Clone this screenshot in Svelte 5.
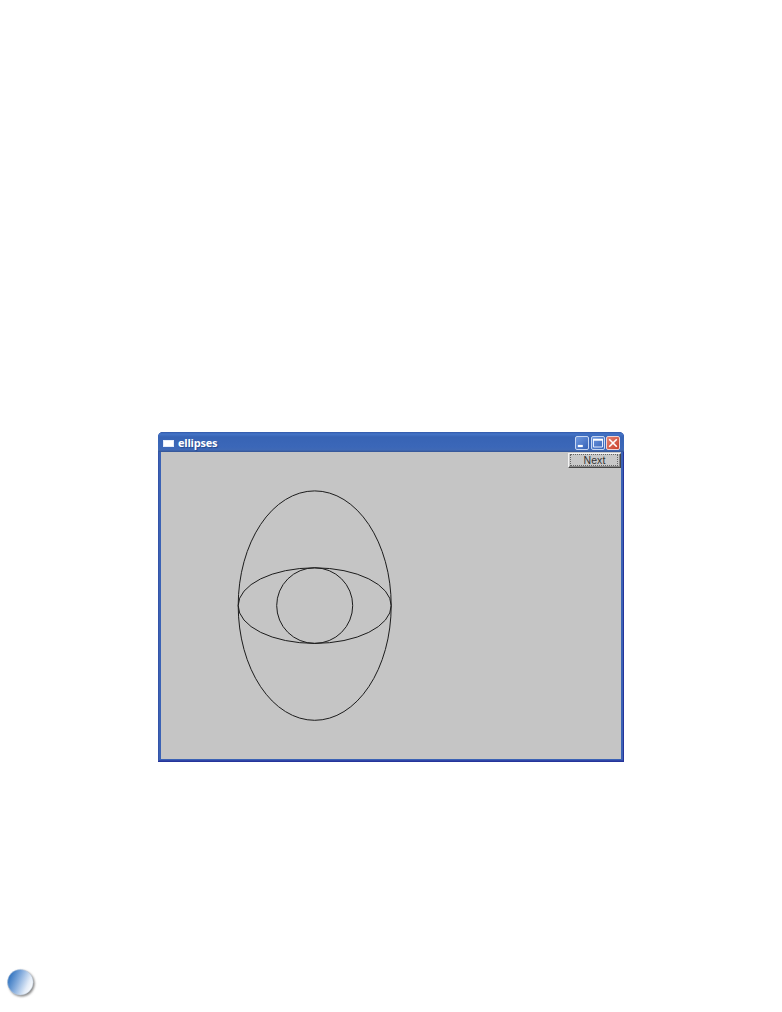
<script>
  const curves = [
    { rx: 76.5, ry: 114.7 },
    { rx: 76.5, ry: 37.8 },
    { rx: 38, ry: 37.8 }
  ];
</script>

<main>
  <section class="window">
    <header>
      <span class="app-icon"></span>
      <h1>ellipses</h1>
      <div class="controls">
        <button class="control" aria-label="Minimize">
          <svg viewBox="0 0 14 14"><path d="M2.8 10h5" stroke="#fff" stroke-width="2.2" /></svg>
        </button>
        <button class="control" aria-label="Maximize">
          <svg viewBox="0 0 14 14"><path d="M2.5 3.5h9v7.5h-9z" fill="none" stroke="#e4edff" /><path d="M2 3.7h10" stroke="#fff" stroke-width="2" /></svg>
        </button>
        <button class="control close" aria-label="Close">
          <svg viewBox="0 0 14 14"><path d="M3.2 3.2l7.6 7.6M10.8 3.2l-7.6 7.6" stroke="#fff" stroke-width="1.6" /></svg>
        </button>
      </div>
    </header>
    <div class="client">
      <button class="next"><span>Next</span></button>
      <svg class="drawing" viewBox="0 0 460 307">
        {#each curves as c}
          <ellipse cx="153.7" cy="153.6" rx={c.rx} ry={c.ry} />
        {/each}
      </svg>
    </div>
  </section>
  <footer>
    <svg width="36" height="36" viewBox="0 0 36 36">
      <defs>
        <linearGradient id="orb" x1="0" y1="0.28" x2="1" y2="0.72">
          <stop offset="0.02" stop-color="#2b6fbd" />
          <stop offset="0.4" stop-color="#83abdc" />
          <stop offset="0.78" stop-color="#e3ecf8" />
          <stop offset="1" stop-color="#fff" />
        </linearGradient>
        <filter id="soft" x="-20%" y="-20%" width="140%" height="140%">
          <feGaussianBlur stdDeviation="0.8" />
        </filter>
      </defs>
      <circle cx="16.6" cy="18.6" r="13" fill="#858585" filter="url(#soft)" />
      <circle cx="15.3" cy="17.2" r="12.8" fill="url(#orb)" stroke="#bccbdd" stroke-width="0.5" />
    </svg>
  </footer>
</main>

<style>
  :global(body) {
    margin: 0;
    background: #fff;
  }
  main {
    box-sizing: border-box;
    width: 782px;
    height: 1012px;
    padding: 432px 0 0 158px;
    display: flex;
    flex-direction: column;
    justify-content: space-between;
    background: #fff;
  }
  .window {
    box-sizing: border-box;
    width: 466px;
    height: 330px;
    padding: 0 3px 3px;
    border-radius: 5px 5px 0 0;
    background: #3b62b5;
    box-shadow: inset -1px -1px #25349a, inset 1px 0 #3554a8, inset 0 -2px #3045a6;
  }
  header {
    display: flex;
    align-items: center;
    box-sizing: border-box;
    height: 20px;
    margin: 0 -3px;
    padding: 2px 4px 0 5px;
    border-radius: 5px 5px 0 0;
    background: linear-gradient(#3158a9 0, #4474c7 2px, #3864b5 5px, #3b67b8 15px, #4069b5 18px, #345493 20px);
  }
  .app-icon {
    box-sizing: border-box;
    width: 11px;
    height: 7px;
    margin-top: 1px;
    background: #fff;
    border: 1px solid #e5edfa;
  }
  h1 {
    margin: 0 0 0 4px;
    color: #fff;
    font: 700 11px/16px "Open Sans", "Noto Sans", sans-serif;
    letter-spacing: -0.2px;
    text-shadow: 1px 1px 1px #23488d;
  }
  .controls {
    display: flex;
    gap: 1.5px;
    margin-left: auto;
  }
  .control {
    box-sizing: border-box;
    width: 14px;
    height: 14px;
    padding: 0;
    border: 1px solid #c8d7f1;
    border-radius: 2px;
    background: linear-gradient(135deg, #6f98df, #3562b7);
  }
  .control svg {
    display: block;
    width: 14px;
    height: 14px;
    margin: -1px;
  }
  .close {
    border-color: #f1d4d1;
    background: linear-gradient(135deg, #e58372, #c9402b);
  }
  .client {
    display: grid;
    height: 307px;
    background: #c5c5c5;
  }
  .drawing,
  .next {
    grid-area: 1 / 1;
  }
  .drawing {
    width: 460px;
    height: 307px;
    fill: none;
    stroke: #1c1c1c;
    stroke-width: 1;
  }
  .next {
    justify-self: end;
    box-sizing: border-box;
    width: 53px;
    height: 15px;
    margin-top: 1px;
    padding: 0;
    border: 1px solid;
    border-color: #f4f4f4 #454545 #454545 #f4f4f4;
    box-shadow: inset -1px -1px #888;
    background: #c8c8c8;
    color: #333;
    font: 10.5px/11px "Liberation Sans", Arial, sans-serif;
    letter-spacing: 0.1px;
  }
  .next span {
    display: block;
    box-sizing: border-box;
    height: 12px;
    margin: 0 2px 1px 1px;
    padding-left: 1px;
    border: 1px dotted #666;
    line-height: 11px;
  }
  footer {
    height: 47px;
    margin-left: -153px;
  }
</style>
